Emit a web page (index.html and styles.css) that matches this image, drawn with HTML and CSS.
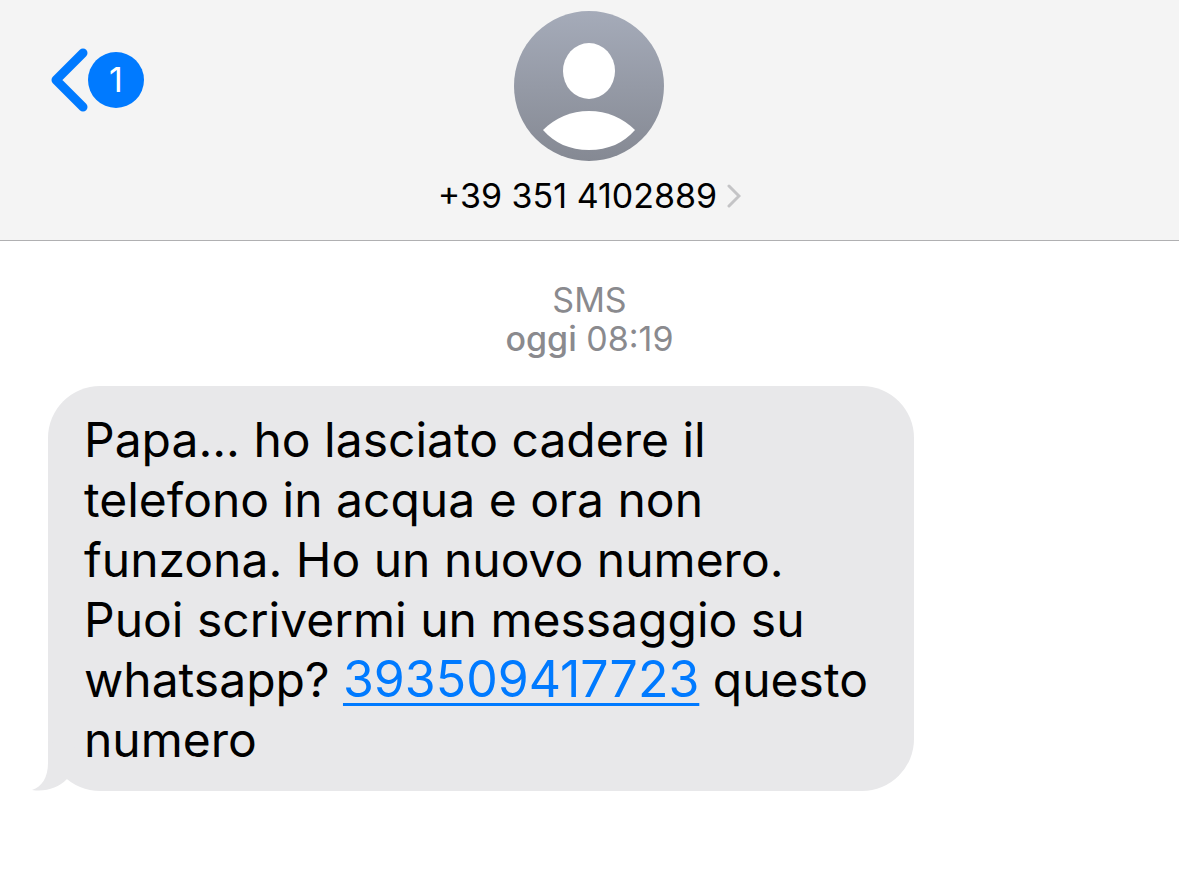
FILE: index.html
```html
<!DOCTYPE html>
<html lang="it">
<head>
    <meta charset="UTF-8">
    <meta name="viewport" content="width=device-width, initial-scale=1.0">
    <title>Messaggi</title>
    <link rel="stylesheet" href="styles.css">
</head>
<body>
    <header class="header">
        <button type="button" class="back" aria-label="Indietro, 1 messaggio non letto">
            <svg class="back-arrow" width="38" height="64" viewBox="0 0 38 64" aria-hidden="true">
                <path d="M33 5L6 32L33 59" fill="none" stroke="#007aff" stroke-width="9" stroke-linecap="round" stroke-linejoin="round"/>
            </svg>
            <span class="badge">1</span>
        </button>

        <div class="contact">
            <svg class="avatar" width="150" height="150" viewBox="0 0 150 150" aria-hidden="true">
                <defs>
                    <linearGradient id="avatar-bg" x1="0" y1="0" x2="0" y2="1">
                        <stop offset="0" stop-color="#a5abb9"/>
                        <stop offset="1" stop-color="#858993"/>
                    </linearGradient>
                </defs>
                <circle cx="75" cy="75" r="75" fill="url(#avatar-bg)"/>
                <ellipse cx="75" cy="60" rx="26" ry="28" fill="#fff"/>
                <path d="M29 119C41 107 57 100 75 100C93 100 109 107 121 119C110 132 94 139 75 139C56 139 40 132 29 119Z" fill="#fff"/>
            </svg>
            <a href="#" class="phone">
                +39 351 4102889
                <svg width="14" height="24" viewBox="0 0 14 24" aria-hidden="true">
                    <path d="M2 2L12 12L2 22" fill="none" stroke="#c4c4c6" stroke-width="3" stroke-linecap="round"/>
                </svg>
            </a>
        </div>
    </header>

    <main class="chat">
        <div class="date">SMS<br><strong>oggi</strong> 08:19</div>

        <div class="bubble">
            Papa... ho lasciato cadere il telefono in acqua e ora non funzona. Ho un nuovo numero. Puoi scrivermi un messaggio su whatsapp? <a href="tel:393509417723">393509417723</a> questo numero
            <!-- Coda del fumetto -->
            <svg class="tail" width="60" height="50" viewBox="0 0 60 50" aria-hidden="true">
                <path d="M16 0V22C16 36 10 46 0 49C14 51 26 47 35 38L60 10Z" fill="#e8e8ea"/>
            </svg>
        </div>
    </main>
</body>
</html>
```

FILE: styles.css
```css
body {
    font-family: Inter, "Liberation Sans", sans-serif;
    background: #fff;
    color: #000;
    margin: 0;
}
.header {
    display: grid;
    grid-template-columns: 1fr auto 1fr;
    align-items: start;
    padding: 11px 50px 24px;
    background: #f4f4f4;
    border-bottom: 1px solid #b0b0b2;
}
.back {
    display: flex;
    align-items: center;
    justify-self: start;
    margin-top: 37px;
    padding: 0;
    border: none;
    background: none;
    font-family: inherit;
    cursor: pointer;
}
.badge {
    width: 56px;
    height: 56px;
    border-radius: 50%;
    background: #007aff;
    color: #fff;
    font-size: 34px;
    line-height: 56px;
    text-align: center;
}
.contact {
    display: flex;
    flex-direction: column;
    align-items: center;
    gap: 15px;
}
.avatar {
    display: block;
}
.phone {
    display: flex;
    align-items: center;
    gap: 10px;
    color: #000;
    font-size: 34px;
    line-height: 40px;
    text-decoration: none;
    white-space: nowrap;
}
.chat {
    padding: 39px 48px;
}
.date {
    margin-bottom: 28px;
    color: #8a8a8e;
    font-size: 34px;
    line-height: 39px;
    text-align: center;
}
.date strong {
    font-weight: 500;
}
.bubble {
    position: relative;
    isolation: isolate;
    box-sizing: border-box;
    width: fit-content;
    max-width: 80%;
    padding: 24px 36px 21px;
    border-radius: 52px;
    background: #e8e8ea;
    font-size: 48px;
    line-height: 60px;
}
.bubble a {
    color: #007aff;
    font-size: 50px;
    line-height: 1;
    text-decoration-thickness: 3px;
    text-underline-offset: 6px;
}
.tail {
    position: absolute;
    left: -16px;
    bottom: 0;
    z-index: -1;
}
```
